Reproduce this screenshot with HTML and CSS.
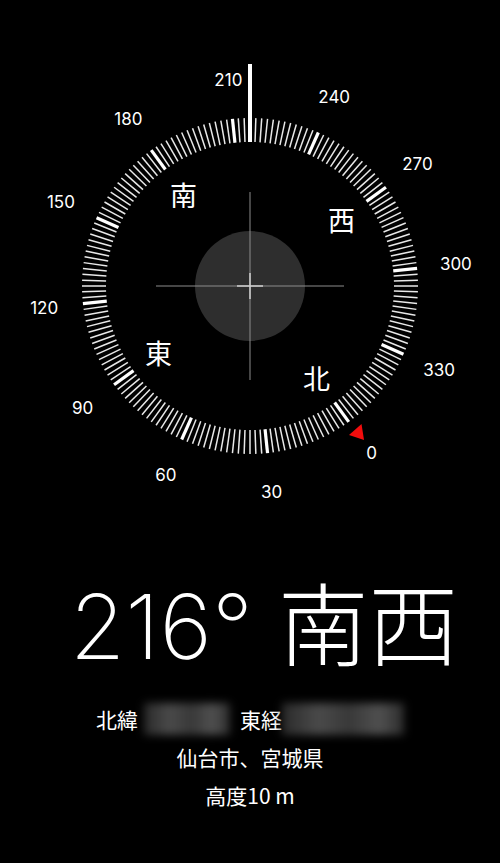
FILE: index.html
```html
<!DOCTYPE html>
<html lang="ja">
<head>
    <meta charset="UTF-8">
    <meta name="viewport" content="width=device-width, initial-scale=1.0">
    <title>コンパス</title>
    <link rel="stylesheet" href="styles.css">
</head>
<body>
    <div class="compass">
        <svg id="dial" width="500" height="510" viewBox="0 0 500 510">
            <g id="ticks"></g>
            <g id="labels"></g>
            <g id="cardinals"></g>
            <!-- Center disc and crosshair -->
            <circle class="disc" cx="250" cy="286" r="55"></circle>
            <line class="cross" x1="156" y1="286" x2="344" y2="286"></line>
            <line class="cross" x1="250" y1="192" x2="250" y2="380"></line>
            <line class="cross-small" x1="237" y1="286" x2="263" y2="286"></line>
            <line class="cross-small" x1="250" y1="273" x2="250" y2="299"></line>
            <!-- Heading marker and north pointer -->
            <rect class="marker" x="248" y="64" width="4" height="78"></rect>
            <polygon class="north" points="349,435 361.5,424 364,440"></polygon>
        </svg>
    </div>

    <div class="heading">216° 南西</div>

    <div class="info">
        <div class="coords">
            <span>北緯</span>
            <span class="hidden lat"></span>
            <span class="east">東経</span>
            <span class="hidden lon"></span>
        </div>
        <div>仙台市、宮城県</div>
        <div>高度10 m</div>
    </div>

    <script>
        const NS = "http://www.w3.org/2000/svg";
        const CX = 250, CY = 286;
        const HEADING = 216;

        // Point on the dial for a bearing, rotated so the heading is at the top
        function point(deg, r) {
            const a = (deg - HEADING) * Math.PI / 180;
            return [CX + r * Math.sin(a), CY - r * Math.cos(a)];
        }

        function make(tag, attrs, parent) {
            const el = document.createElementNS(NS, tag);
            for (const k in attrs) el.setAttribute(k, attrs[k]);
            parent.appendChild(el);
            return el;
        }

        const ticks = document.getElementById("ticks");
        for (let d = 0; d < 360; d += 2) {
            const [x1, y1] = point(d, 144);
            const [x2, y2] = point(d, 168);
            make("line", {
                x1, y1, x2, y2,
                class: d % 30 === 0 ? "tick major" : "tick"
            }, ticks);
        }

        const labels = document.getElementById("labels");
        for (let d = 0; d < 360; d += 30) {
            const [x, y] = point(d, 207);
            make("text", { x, y, class: "deg" }, labels).textContent = d;
        }

        const cardinals = document.getElementById("cardinals");
        [["北", 0], ["東", 90], ["南", 180], ["西", 270]].forEach(([name, d]) => {
            const [x, y] = point(d, 113);
            make("text", { x, y, class: "cardinal" }, cardinals).textContent = name;
        });
    </script>
</body>
</html>
```

FILE: styles.css
```css
body {
    margin: 0;
    padding: 0;
    background-color: #000;
    color: #fff;
    font-family: Inter, "Noto Sans CJK JP", sans-serif;
    width: 500px;
    height: 863px;
    overflow: hidden;
}
.compass svg {
    display: block;
}
.tick {
    stroke: #e8e8e8;
    stroke-width: 1.5;
}
.tick.major {
    stroke: #fff;
    stroke-width: 3.2;
}
.deg {
    fill: #fff;
    font-family: Inter, sans-serif;
    font-size: 17px;
    text-anchor: middle;
    dominant-baseline: central;
}
.cardinal {
    fill: #fff;
    font-family: "Noto Sans CJK JP", sans-serif;
    font-size: 27px;
    font-weight: 400;
    text-anchor: middle;
    dominant-baseline: central;
}
.disc {
    fill: #2e2e2e;
}
.cross {
    stroke: #8c8c8c;
    stroke-width: 1;
}
.cross-small {
    stroke: #d0d0d0;
    stroke-width: 1.5;
}
.marker {
    fill: #fff;
}
.north {
    fill: #f20d0d;
}
.heading {
    margin-top: 72px;
    padding-left: 28px;
    font-size: 90px;
    line-height: 90px;
    font-weight: 200;
    text-align: center;
    white-space: nowrap;
}
.info {
    margin-top: 28px;
    font-family: "Noto Sans CJK JP", sans-serif;
    font-size: 21px;
    line-height: 38px;
    text-align: center;
}
.coords {
    display: flex;
    justify-content: center;
    align-items: center;
}
.hidden {
    display: inline-block;
    height: 32px;
    background: linear-gradient(90deg, #2a2a2a, #4a4a4a 30%, #383838 55%, #505050 80%, #2c2c2c);
    filter: blur(4px);
}
.lat {
    width: 86px;
    margin-left: 6px;
}
.lon {
    width: 122px;
}
.east {
    margin-left: 10px;
}
```
